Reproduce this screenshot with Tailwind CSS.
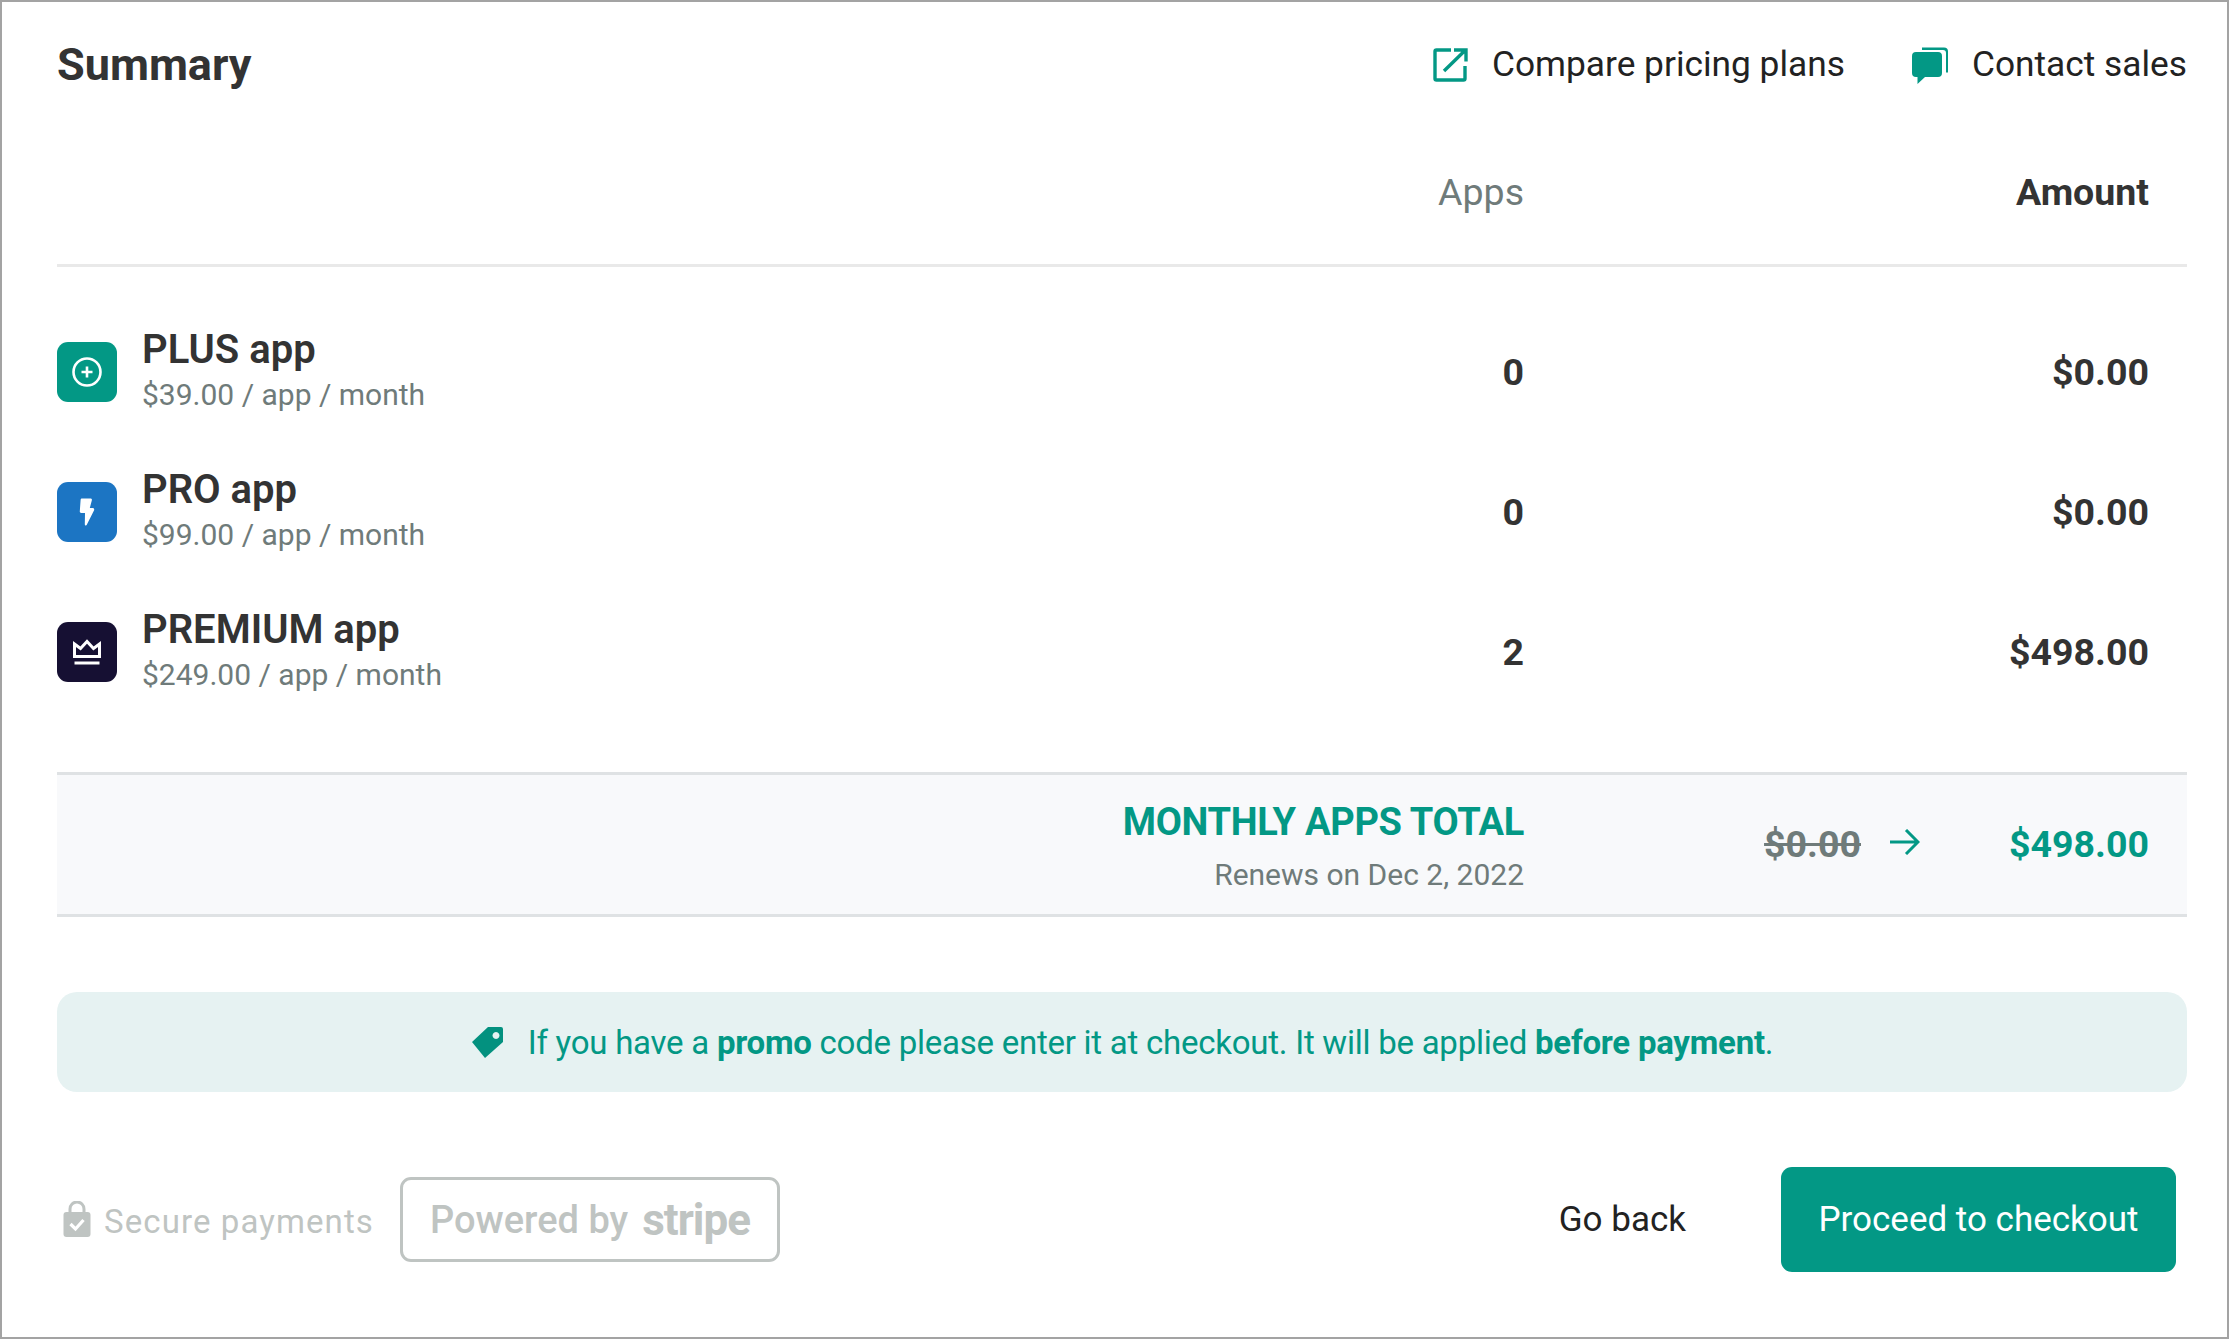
<!DOCTYPE html>
<html>
<head>
<meta charset="utf-8">
<script src="https://cdn.jsdelivr.net/npm/@tailwindcss/browser@4"></script>
</head>
<body class="m-0 bg-white">
<div class="w-[2229px] h-[1339px] box-border border-2 border-[#a3a3a3] bg-white font-['Roboto',sans-serif] text-[#333333] pl-[55px] pr-[40px] overflow-hidden">
  <div class="h-[124px] flex items-center justify-between">
    <h1 class="text-[45px] font-bold leading-none">Summary</h1>
    <div class="flex items-center pt-[2px]">
      <svg class="w-[35px] h-[34px] mr-[24px]" viewBox="0 0 35 34" fill="none" stroke="#039885" stroke-width="3.4"><path d="M18 2H3.500a1.500 1.500 0 0 0-1.500 1.500v27a1.500 1.500 0 0 0 1.500 1.500h27a1.500 1.500 0 0 0 1.500-1.500V18"/><path d="M11 23 32.500 2M21 2h12v11.500"/></svg>
      <span class="text-[35.300px] leading-none text-[#222222]">Compare pricing plans</span>
      <svg class="w-[37px] h-[37px] ml-[66px] mr-[24px]" viewBox="0 0 37 37"><path d="M11 .5h22a4 4 0 0 1 4 4v21h-2V6a3 3 0 0 0-3-3H11z" fill="#039885"/><path d="M5 5h22a4 4 0 0 1 4 4v17a4 4 0 0 1-4 4H14l-7.500 7v-7H5a4 4 0 0 1-4-4V9a4 4 0 0 1 4-4z" fill="#039885"/></svg>
      <span class="text-[35.300px] leading-none text-[#222222]">Contact sales</span>
    </div>
  </div>
  <div class="h-[141px] box-border pt-[1px] pb-[5px] border-b-[3px] border-[#e9e9e9] flex items-center pr-[38px]">
    <div class="flex-1"></div>
    <div class="text-[37.500px] leading-none text-[#6f7b7a]">Apps</div>
    <div class="w-[625px] text-right text-[37.500px] leading-none font-bold">Amount</div>
  </div>
  <div class="pt-[35px] mb-[50px]">
    <div class="h-[140px] flex items-center pr-[38px]">
      <div class="w-[60px] h-[60px] rounded-[11px] bg-[#039885] flex items-center justify-center">
        <svg class="w-[30px] h-[30px]" viewBox="0 0 30 30" fill="none" stroke="#fff"><circle cx="15" cy="15" r="13.500" stroke-width="2.600"/><path d="M15 9.500v11M9.500 15h11" stroke-width="2.600"/></svg>
      </div>
      <div class="ml-[25px] pb-[2px] flex-1 flex flex-col">
        <div class="text-[40px] leading-[46px] font-semibold">PLUS app</div>
        <div class="mt-[1px] text-[30px] leading-[42px] text-[#6f7b7a]">$39.00 / app / month</div>
      </div>
      <div class="mt-[2px] text-[37.500px] font-bold leading-none">0</div>
      <div class="mt-[2px] w-[625px] text-right text-[37.500px] font-bold leading-none">$0.00</div>
    </div>
    <div class="h-[140px] flex items-center pr-[38px]">
      <div class="w-[60px] h-[60px] rounded-[11px] bg-[#1c75c3] flex items-center justify-center">
        <svg class="w-[16px] h-[28px]" viewBox="0 0 16 28" fill="#fff"><path d="M3 .5h8.500c1.200 0 1.700 1 1.300 2L10.800 10H13.500c1.400 0 2 1 1.600 2.300L7.800 26.800c-.6 1.100-2 .6-2-.6L6 15H2.300C1.200 15 .6 14.200.8 13.200L1.600 2C1.700 1 2 .5 3 .5z"/></svg>
      </div>
      <div class="ml-[25px] pb-[2px] flex-1 flex flex-col">
        <div class="text-[40px] leading-[46px] font-semibold">PRO app</div>
        <div class="mt-[1px] text-[30px] leading-[42px] text-[#6f7b7a]">$99.00 / app / month</div>
      </div>
      <div class="mt-[2px] text-[37.500px] font-bold leading-none">0</div>
      <div class="mt-[2px] w-[625px] text-right text-[37.500px] font-bold leading-none">$0.00</div>
    </div>
    <div class="h-[140px] flex items-center pr-[38px]">
      <div class="w-[60px] h-[60px] rounded-[11px] bg-[#161033] flex items-center justify-center">
        <svg class="w-[30px] h-[26px]" viewBox="0 0 30 26" fill="none" stroke="#fff" stroke-width="3"><path d="M2.500 5 8.500 9.500 15 2.500l6.500 7 6-4.500V17.500H2.500z"/><path d="M2.500 24h25" stroke-width="3"/></svg>
      </div>
      <div class="ml-[25px] pb-[2px] flex-1 flex flex-col">
        <div class="text-[40px] leading-[46px] font-semibold">PREMIUM app</div>
        <div class="mt-[1px] text-[30px] leading-[42px] text-[#6f7b7a]">$249.00 / app / month</div>
      </div>
      <div class="mt-[2px] text-[37.500px] font-bold leading-none">2</div>
      <div class="mt-[2px] w-[625px] text-right text-[37.500px] font-bold leading-none">$498.00</div>
    </div>
  </div>
  <div class="h-[145px] box-border border-y-[3px] border-[#dfe2e4] bg-[#f8f9fb] flex items-center pr-[38px]">
    <div class="flex-1 pt-[7px] flex flex-col items-end">
      <div class="text-[38px] leading-[44px] font-bold text-[#039885] tracking-[-0.3px]">MONTHLY APPS TOTAL</div>
      <div class="mt-[10px] text-[30px] leading-[42px] text-[#6f7b7a]">Renews on Dec 2, 2022</div>
    </div>
    <div class="w-[625px] flex items-center justify-end">
      <span class="text-[37.500px] leading-none font-bold text-[#6f7b7a] line-through">$0.00</span>
      <svg class="w-[30px] h-[26px] ml-[29px] mb-[5px]" viewBox="0 0 30 26" fill="none" stroke="#039885" stroke-width="3"><path d="M0 13h28M16 1l12 12-12 12"/></svg>
      <span class="w-[229px] text-right text-[37.500px] leading-none font-bold text-[#039885]">$498.00</span>
    </div>
  </div>
  <div class="mt-[75px] h-[100px] rounded-[20px] bg-[#e6f2f2] flex items-center justify-center text-[33px] leading-none tracking-[-0.25px] text-[#039885]">
    <svg class="w-[32px] h-[32px] mr-[25px]" viewBox="0 0 32 32"><path fill-rule="evenodd" fill="#03917f" d="M17 1h13a2 2 0 0 1 2 2v13L14 32 1 16zM25 6a3.500 3.500 0 1 0 .01 0z"/></svg>
    <span>If you have a <b class="font-bold">promo</b> code please enter it at checkout. It will be applied <b class="font-bold">before payment</b>.</span>
  </div>
  <div class="mt-[75px] h-[105px] flex items-center pr-[11px]">
    <svg class="ml-[6px] mb-[2px] w-[28px] h-[36px]" viewBox="0 0 28 36"><path fill="none" stroke="#bfc4c2" stroke-width="3" d="M7 14V8a7 7 0 0 1 14 0v6"/><rect x="0.500" y="11" width="27" height="25" rx="3" fill="#bfc4c2"/><path d="M7.500 23l5 5 8-9" fill="none" stroke="#fff" stroke-width="3.200"/></svg>
    <span class="ml-[13px] mt-[4px] text-[33px] leading-none text-[#bfc4c2] tracking-[1.1px]">Secure payments</span>
    <div class="ml-[26px] w-[380px] h-[85px] box-border border-[3px] border-[#bfc4c2] rounded-[11px] flex items-center justify-center text-[#bfc4c2] font-bold">
      <span class="text-[38px] leading-none font-medium">Powered by</span>
      <span class="ml-[14px] text-[44px] leading-none font-bold tracking-[-1px]">stripe</span>
    </div>
    <div class="flex-1"></div>
    <span class="text-[35px] leading-none text-[#222222] mr-[95px]">Go back</span>
    <div class="w-[395px] h-[105px] rounded-[11px] bg-[#039885] flex items-center justify-center text-[35px] leading-none text-white">Proceed to checkout</div>
  </div>
</div>
</body>
</html>
